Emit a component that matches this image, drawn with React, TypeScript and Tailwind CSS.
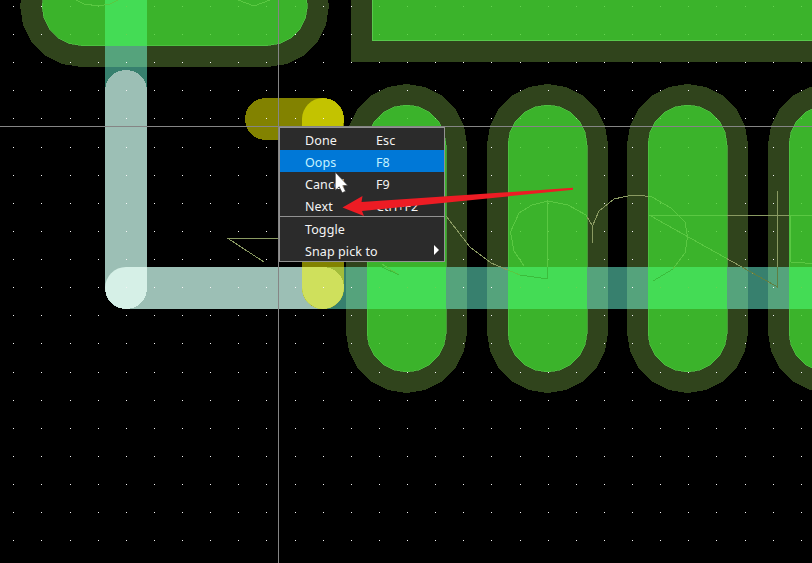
const GREEN = '#3bb32b';
const OLIVE = '#30441c';

// Builds the faceted outline of a rounded pad: ten segments per half circle.
function capsule(x1: number, y1: number, x2: number, y2: number, r: number) {
  const start = x1 === x2 ? 0 : -90;
  const pts: string[] = [];
  for (let i = 0; i <= 10; i++) {
    const a = ((start + i * 18) * Math.PI) / 180;
    pts.push(`${(x2 + r * Math.cos(a)).toFixed(2)},${(y2 + r * Math.sin(a)).toFixed(2)}`);
  }
  for (let i = 10; i <= 20; i++) {
    const a = ((start + i * 18) * Math.PI) / 180;
    pts.push(`${(x1 + r * Math.cos(a)).toFixed(2)},${(y1 + r * Math.sin(a)).toFixed(2)}`);
  }
  return pts.join(' ');
}

const padCenters = [406.5, 547.5, 687.5, 828.5];
const outerPads = [...padCenters.map((x) => capsule(x, 144.5, x, 332.5, 60.5)), capsule(81, 6, 268, 6, 61)];
const innerPads = [...padCenters.map((x) => capsule(x, 144.5, x, 332.5, 39.5)), capsule(81.5, 6, 268, 6, 39.5)];

const dots: [number, number][] = [];
for (let i = 0; i < 29; i++) {
  for (let j = 0; j < 20; j++) {
    dots.push([Math.floor(13.85 + i * 28.125), Math.floor(6.4 + j * 28.125)]);
  }
}

const verticalTrace = 'M105 91A21 21 0 0 1 147 91V288A21 21 0 0 1 105 288Z';
const horizontalTrace = 'M126 267H323A21 21 0 0 1 323 309H126A21 21 0 0 1 126 267Z';
const yellowVertical = 'M302 119A21 21 0 0 1 344 119V288A21 21 0 0 1 302 288Z';
const yellowHorizontal = 'M266 98H323A21 21 0 0 1 323 140H266A21 21 0 0 1 266 98Z';

const silk = [
  'M279 238.5H228L264 262',
  'M446 216L470 247L491 263L520 275L547.5 279V200',
  'M524 266L514 251L510.5 232L519 213L532 205L548 201L568 205L586 215L592.5 226V243',
  'M592.5 226L599 211L614 199L630 195.5H641L652 197L671 208L685 222L687.5 237L685 253L673 269L653 281',
  'M812 215.5H650L777.5 287V191',
  'M790.5 215V262L812 263.5',
  'M382 264L399 275',
  'M76 0L84 4L99 6L110 4L118 0',
  'M238 0L254 6L270 0',
];

function Board() {
  return (
    <svg className="block h-full w-full" viewBox="0 0 812 563" shapeRendering="crispEdges" fill="none">
      <defs>
        <clipPath id="teal"><path d="M105 0H147V91H105ZM323 267H812V309H323Z" /></clipPath>
        <clipPath id="horizontal"><path d={horizontalTrace} /></clipPath>
        <clipPath id="yellow"><path d={yellowVertical} /></clipPath>
        <clipPath id="copper">
          {innerPads.map((p) => <polygon key={p} points={p} />)}
          <rect x="372" y="0" width="440" height="41" />
        </clipPath>
      </defs>
      <g fill={OLIVE}>
        {outerPads.map((p) => <polygon key={p} points={p} />)}
        <rect x="351" y="0" width="461" height="62" />
      </g>
      <g fill={GREEN} stroke="#58c94c" strokeWidth="0.6">
        {innerPads.map((p) => <polygon key={p} points={p} />)}
        <path d="M372.5 -1V40.5H813V-1Z" strokeWidth="1" />
      </g>
      <g clipPath="url(#teal)">
        <rect width="812" height="563" fill="#37806e" />
        <g fill="#55a37c">{outerPads.map((p) => <polygon key={p} points={p} />)}</g>
        <g fill="#44dc55">{innerPads.map((p) => <polygon key={p} points={p} />)}</g>
      </g>
      <path d={silk.join('')} stroke="#8a9a62" />
      <path d={silk.join('')} stroke="#5ac842" clipPath="url(#copper)" />
      <path d="M520 275L547.5 279V267M382 267L399 275M673 269L653 281" stroke="#3bbd3b" />
      <path d="M742 267L777.5 287V267" stroke="#5f7f42" />

      <path d={verticalTrace} fill="#9cbfb5" />
      <path d={horizontalTrace} fill="#9cbfb5" />
      <path d={verticalTrace} fill="#d6f0e7" clipPath="url(#horizontal)" />

      <path d={yellowHorizontal} fill="#828200" />
      <path d={yellowVertical} fill="#828200" />
      <g clipPath="url(#yellow)">
        <path d={yellowHorizontal} fill="#c3c300" />
        <rect x="302" y="267" width="42" height="42" fill="#a3bd3a" />
        <path d={horizontalTrace} fill="#cfe05c" />
      </g>

      {dots.map(([x, y]) => <rect key={`${x}-${y}`} x={x} y={y} width="1" height="1" fill="#f4f4f4" />)}
      <g clipPath="url(#copper)">
        {dots.map(([x, y]) => <rect key={`${x}-${y}`} x={x} y={y} width="1" height="1" fill="#66d450" />)}
      </g>
      <path d="M0 126.5H812M278.5 0V563" stroke="#858585" />
    </svg>
  );
}

const items = [
  { label: 'Done', shortcut: 'Esc' },
  { label: 'Oops', shortcut: 'F8', active: true },
  { label: 'Cancel', shortcut: 'F9' },
  { label: 'Next', shortcut: 'Ctrl+F2' },
];

function ContextMenu() {
  return (
    <div className="absolute left-[279px] top-[127px] h-[135px] w-[166px] border border-[#929292] bg-[#2b2b2b] font-['Noto_Sans','Open_Sans',sans-serif] text-[12.5px] tracking-[0.1px] text-[#f4f4f4]">
      {items.map((item) => (
        <div key={item.label} className={`flex h-[22px] items-center pl-[25px] pt-1 leading-[22px] ${item.active ? 'bg-[#0078d7] text-[#c5f2ff]' : ''}`}>
          <span className="w-[71px]">{item.label}</span>
          <span>{item.shortcut}</span>
        </div>
      ))}
      <div className="h-px bg-[#929292]" />
      <div className="flex h-[22px] items-center pl-[25px] pt-1 leading-[22px]">Toggle</div>
      <div className="flex h-[22px] items-center justify-between pl-[25px] pr-[5px] pt-1 leading-[22px]">
        <span>Snap pick to</span>
        <svg className="-mt-1 h-[10px] w-[5px]" viewBox="0 0 5 10"><path d="M0 0L5 5L0 10Z" fill="#fff" /></svg>
      </div>
    </div>
  );
}

export default function App() {
  return (
    <main className="relative h-[563px] w-[812px] overflow-hidden bg-black">
      <Board />
      <ContextMenu />
      <svg className="absolute inset-0 h-full w-full" viewBox="0 0 812 563">
        <path d="M335.3 172.3V190.3L339.2 186.8L342.2 192.8L345.6 191.2L342.8 185.6H347.8Z" fill="#fff" stroke="#2b2b2b" strokeWidth="0.6" />
        <path d="M342.5 207.5L362.5 196L361.5 202L573 187.8V189.8L362 211L364 216Z" fill="#ed1c24" />
      </svg>
    </main>
  );
}
